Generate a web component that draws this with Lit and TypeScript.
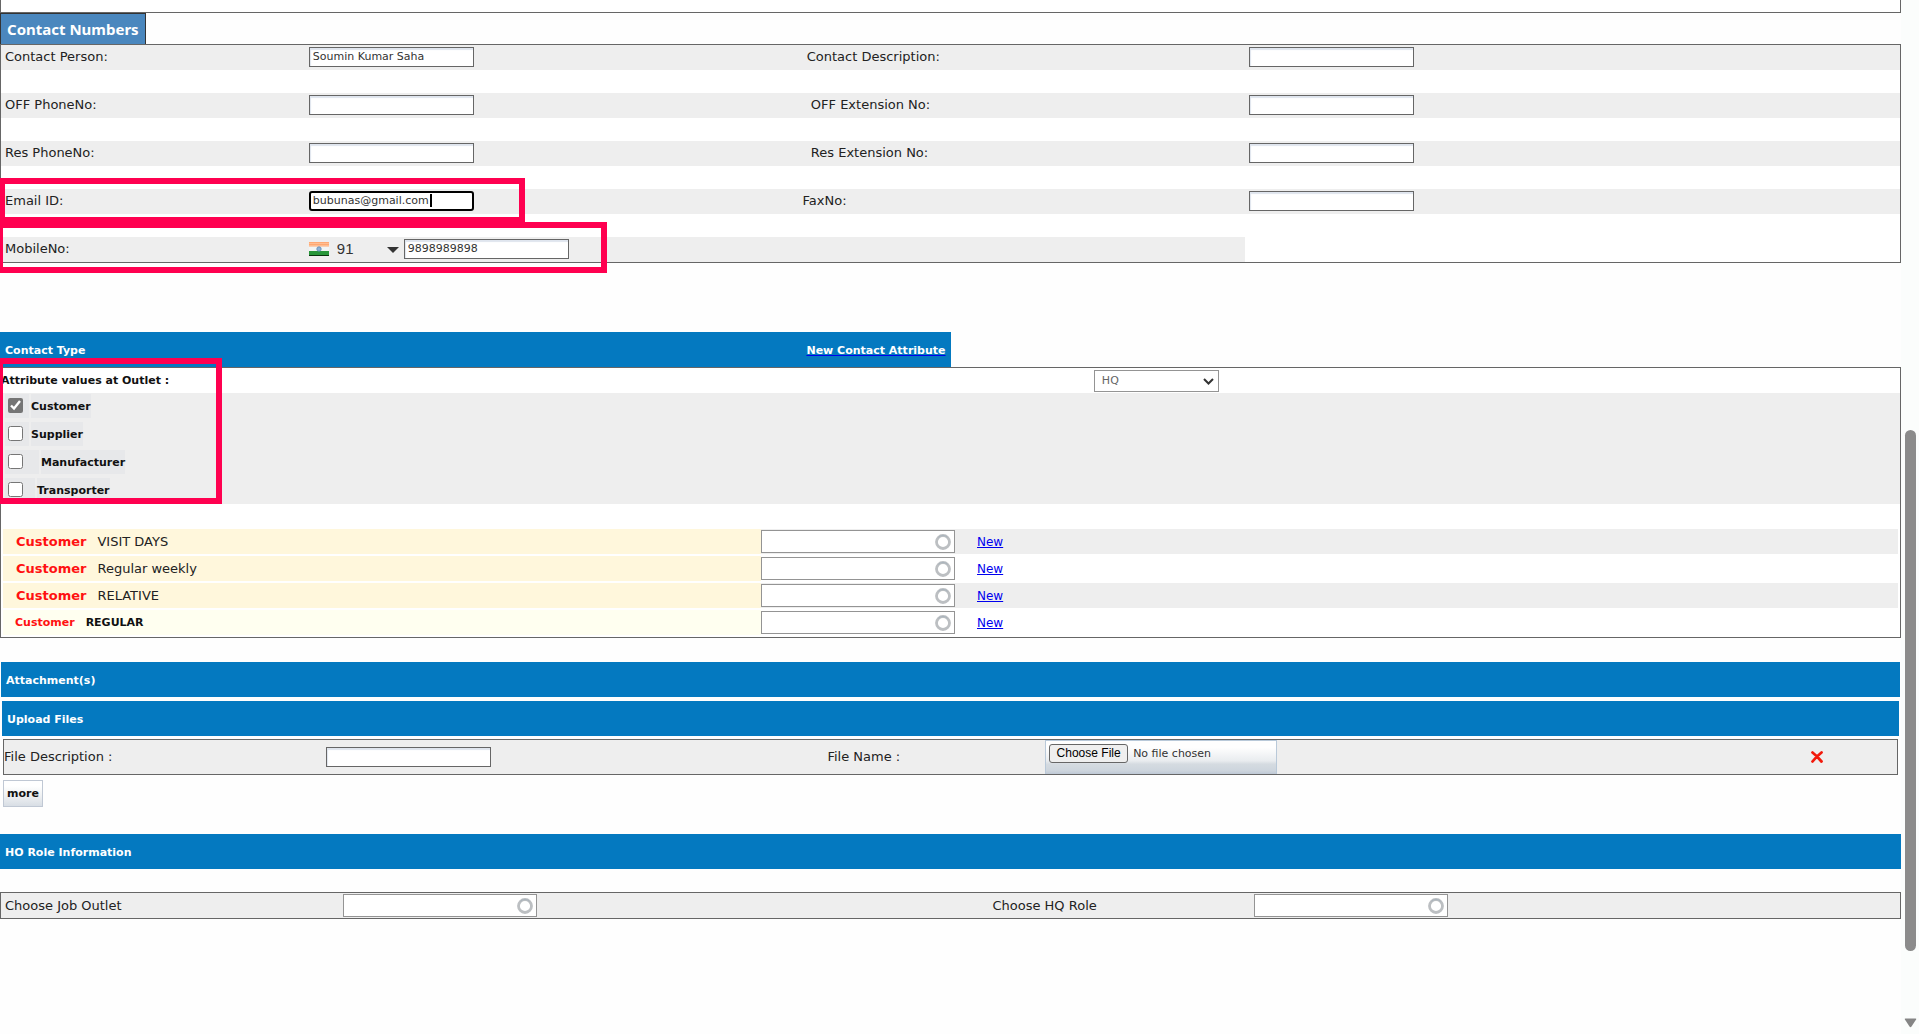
import { LitElement, html, css, nothing } from "lit";
import { customElement, property } from "lit/decorators.js";

interface ContactRow {
  id: string;
  label: string;
  value?: string;
  rightId?: string;
  rightLabel?: string;
}

const NB = "\u00a0";

const CONTACT_ROWS: ContactRow[] = [
  { id: "person", label: "Contact Person:", value: "Soumin Kumar Saha", rightId: "description", rightLabel: `${NB}Contact Description:` },
  { id: "off-phone", label: "OFF PhoneNo:", rightId: "off-ext", rightLabel: `${NB}${NB}OFF Extension No:` },
  { id: "res-phone", label: "Res PhoneNo:", rightId: "res-ext", rightLabel: `${NB}${NB}Res Extension No:` },
  { id: "email", label: "Email ID:", value: "bubunas@gmail.com", rightId: "fax", rightLabel: "FaxNo:" },
  { id: "mobile", label: "MobileNo:", value: "9898989898" },
];

const TYPES = [
  { id: "customer", label: "Customer", checked: true, size: "" },
  { id: "supplier", label: "Supplier", checked: false, size: "" },
  { id: "manufacturer", label: "Manufacturer", checked: false, size: "wide" },
  { id: "transporter", label: "Transporter", checked: false, size: "mid" },
];

const ATTRIBUTES = [
  { id: "visit-days", name: "VISIT DAYS", strong: false },
  { id: "weekly", name: "Regular weekly", strong: false },
  { id: "relative", name: "RELATIVE", strong: false },
  { id: "regular", name: "REGULAR", strong: true },
];

@customElement("lookup-field")
class LookupField extends LitElement {
  @property() label = "";

  static styles = css`
    :host {
      display: block;
    }
    .field {
      display: flex;
      align-items: center;
      box-sizing: border-box;
      width: 194px;
      height: 23px;
      border: 1px solid #949494;
      background: #fff;
      padding-right: 3px;
    }
    .text {
      flex: 1;
      min-width: 0;
      border: 0;
      outline: 0;
      background: none;
      font: 11px "DejaVu Sans", sans-serif;
    }
  `;

  render() {
    return html`<div class="field">
      <input class="text" type="text" aria-label=${this.label} />
      <svg width="16" height="16" viewBox="0 0 16 16" aria-hidden="true">
        <circle cx="8" cy="8" r="6.5" fill="none" stroke="#bcbfc2" stroke-width="2.8" />
        <path d="M3.4 3.4A6.5 6.5 0 0 1 12.6 3.4" fill="none" stroke="#a9b4bd" stroke-width="1" />
      </svg>
    </div>`;
  }
}

@customElement("app-root")
class AppRoot extends LitElement {
  static styles = css`
    :host {
      display: block;
      font: 13px/16px "DejaVu Sans", Verdana, sans-serif;
      color: #222;
    }
    .page {
      display: grid;
      grid-template-columns: minmax(0, 1fr) 18px;
      min-height: 100vh;
      background: #fefefe;
      overflow: hidden;
    }
    .content {
      min-width: 0;
    }
    .panel {
      box-sizing: border-box;
      border: 1px solid #666;
      background: #fff;
    }
    .previous {
      height: 13px;
      border-top: 0;
    }
    .tab {
      display: flex;
      align-items: center;
      box-sizing: border-box;
      width: max-content;
      height: 31px;
      margin: 0;
      padding: 0 6px;
      border: 1px solid #333;
      border-bottom: 0;
      background: #4a87be;
      color: #fff;
      font: bold 15px/18px "Noto Sans", sans-serif;
    }
    .anchor {
      position: relative;
    }
    .contact {
      display: grid;
      row-gap: 23px;
    }
    .row {
      display: grid;
      grid-template-columns: 16% 26% 23.5% minmax(0, 1fr);
      height: 25px;
    }
    .cell {
      display: flex;
      align-items: center;
      padding: 0 4px 1px;
      background: #eee;
      white-space: nowrap;
    }
    .blank {
      background: #fff;
    }
    .input {
      box-sizing: border-box;
      width: 165px;
      height: 20px;
      margin: 0;
      padding: 0 3px 2px;
      border: 1px solid #666;
      border-radius: 0;
      outline: 0;
      background: #fff;
      box-shadow: inset 1px 2px 1px #dfe5ee;
      color: #333;
      font: 11px/14px "DejaVu Sans", Verdana, sans-serif;
    }
    .active {
      padding: 0 2px 2px;
      border: 2px solid #000;
      border-radius: 3px;
      box-shadow: none;
    }
    .caret {
      position: absolute;
      top: 3px;
      left: 121px;
      width: 2px;
      height: 13px;
      background: #000;
    }
    .phone {
      display: flex;
      align-items: center;
    }
    .code {
      position: relative;
      display: flex;
      align-items: center;
      width: 95px;
    }
    .code-select {
      flex: 1;
      height: 20px;
      padding: 0 0 0 8px;
      border: 0;
      appearance: none;
      background: none;
      color: #333;
      font: 15px/18px "Liberation Sans", sans-serif;
    }
    .code-arrow {
      position: absolute;
      right: 5px;
      top: 8px;
      pointer-events: none;
    }
    .mark {
      position: absolute;
      box-sizing: border-box;
      border: 6px solid #ff0050;
      pointer-events: none;
    }
    .mark-email {
      top: 134px;
      left: -1px;
      width: 526px;
      height: 45px;
    }
    .mark-mobile {
      top: 178px;
      left: -3px;
      width: 610px;
      height: 51px;
    }
    .mark-types {
      top: 26px;
      left: -3px;
      width: 225px;
      height: 146px;
    }
    .type {
      margin-top: 69px;
    }
    .bar {
      display: flex;
      align-items: center;
      justify-content: space-between;
      box-sizing: border-box;
      height: 35px;
      margin: 0;
      padding: 2px 5px 0;
      background: #0479c0;
      color: #fff;
      font: bold 11px/14px "DejaVu Sans", Verdana, sans-serif;
    }
    .half {
      width: 50%;
    }
    .bar-title {
      margin: 0;
      font: inherit;
    }
    .bar-link {
      color: #fff;
      text-decoration: underline #0000ee;
    }
    .outlet {
      display: grid;
      grid-template-columns: 57.55% minmax(0, 1fr);
      align-items: center;
      height: 25px;
      color: #111;
      font: bold 11px/14px "DejaVu Sans", Verdana, sans-serif;
    }
    .select-wrap {
      position: relative;
      width: 125px;
      height: 22px;
    }
    .select {
      box-sizing: border-box;
      width: 100%;
      height: 100%;
      padding: 0 7px;
      border: 1px solid #949494;
      appearance: none;
      background: #fff;
      color: #666;
      font: 11px/14px "DejaVu Sans", Verdana, sans-serif;
    }
    .select-arrow {
      position: absolute;
      right: 5px;
      top: 8px;
      pointer-events: none;
    }
    .types {
      display: grid;
      align-content: start;
      box-sizing: border-box;
      row-gap: 4px;
      height: 111px;
      padding: 1px 0 0 4px;
      background: #eee;
      color: #111;
      font: bold 11px/14px "DejaVu Sans", Verdana, sans-serif;
    }
    .type-row {
      display: flex;
      gap: 2px;
      height: 24px;
    }
    .check-cell {
      display: flex;
      align-items: center;
      width: 24px;
      background: #e7e8ea;
    }
    .mid {
      width: 30px;
    }
    .wide {
      width: 34px;
    }
    .check {
      width: 15px;
      height: 15px;
      margin: 0 3px 1px;
      accent-color: #757575;
    }
    .check-label {
      display: flex;
      align-items: center;
      padding-top: 1px;
      background: #e7e8ea;
    }
    .attributes {
      display: grid;
      row-gap: 2px;
      padding: 25px 2px 2px;
    }
    .attribute {
      display: grid;
      grid-template-columns: 40% minmax(0, 1fr);
      height: 25px;
    }
    .attribute-name {
      display: flex;
      align-items: center;
      gap: 11px;
      padding-left: 13px;
      background: #fff7dc;
    }
    .attribute-last {
      padding-left: 12px;
      background: #fffff0;
      color: #111;
      font: bold 11px/14px "DejaVu Sans", Verdana, sans-serif;
    }
    .who {
      color: #f11;
      font-weight: bold;
    }
    .attribute-value {
      display: flex;
      align-items: center;
      gap: 22px;
      background: #eee;
    }
    .attribute:nth-child(even) .attribute-value,
    .attribute-name.attribute-last + .attribute-value {
      background: #fff;
    }
    .new {
      color: #0000ee;
      font-size: 12px;
    }
    .attachments {
      display: grid;
      gap: 4px;
      margin: 24px 1px 0;
    }
    .upload {
      margin: 0 1px;
    }
    .file {
      display: grid;
      grid-template-columns: 17% 26.5% 11.5% minmax(0, 1fr) 88px;
      align-items: center;
      height: 36px;
      margin: 3px 1px 0;
      background: #eee;
    }
    .file-pick {
      box-sizing: border-box;
      width: 232px;
      height: 34px;
      padding: 3px;
      border: 1px solid #b9c9d9;
      border-bottom: 0;
      background: linear-gradient(#fefefe 20%, #e9ecef 60%, #d5dbe1 70%, #cdd5dd 90%, #bfc9d6);
      color: #333;
      font: 11px/14px "DejaVu Sans", Verdana, sans-serif;
    }
    .file-pick::file-selector-button {
      box-sizing: border-box;
      width: 79px;
      height: 19px;
      margin: 0 5px 0 0;
      padding: 0;
      border: 1px solid #666;
      border-radius: 3px;
      background: #efefef;
      color: #000;
      font: 12px/15px "Liberation Sans", sans-serif;
    }
    .remove {
      display: flex;
      width: 16px;
      padding: 2px;
      border: 0;
      background: none;
    }
    .more {
      justify-self: start;
      box-sizing: border-box;
      height: 27px;
      margin: 1px 2px 0;
      padding: 0 3px;
      border: 1px solid #c0c8d4;
      background: linear-gradient(#fff 20%, #eef0f2 60%, #d8dee5);
      color: #111;
      font: bold 11px/14px "DejaVu Sans", Verdana, sans-serif;
    }
    .role-bar {
      margin-top: 27px;
    }
    .role {
      display: grid;
      grid-template-columns: 18% 34% 14% minmax(0, 1fr);
      align-items: center;
      height: 27px;
      margin-top: 23px;
      background: #eee;
    }
    .role-label {
      padding-left: 4px;
    }
    .scroll {
      display: grid;
      grid-template-rows: 430fr 521fr 67fr 16px;
      justify-items: center;
      background: #fbfdfc;
    }
    .thumb {
      grid-row: 2;
      width: 11px;
      border-radius: 6px;
      background: #8b8b8b;
    }
    .scroll-arrow {
      grid-row: 4;
    }
  `;

  private leftField(r: ContactRow) {
    if (r.id === "mobile") {
      return html`<div class="phone">
        <div class="code">
          <svg width="20" height="14" viewBox="0 0 20 14" aria-hidden="true">
            <path d="M0 0h20v5H0z" fill="#ffa872" />
            <path d="M0 1.5h20M0 3.5h20" stroke="#ffbd91" />
            <path d="M0 4.5h20v5H0z" fill="#f1f5f5" />
            <path d="M0 9h20v5H0z" fill="#28963a" />
            <path d="M0 13.5h20" stroke="#08330e" />
            <circle cx="10" cy="7" r="2.2" fill="#8fb2d4" stroke="#5a86b5" stroke-width=".8" />
          </svg>
          <select class="code-select" aria-label="Country code"><option>91</option></select>
          <svg class="code-arrow" width="12" height="6" viewBox="0 0 12 6" aria-hidden="true">
            <path d="M0 0h12L6 6z" fill="#333" />
          </svg>
        </div>
        <input class="input" id="mobile" type="tel" .value=${r.value ?? ""} />
      </div>`;
    }
    if (r.id === "email") {
      return html`<div class="anchor phone">
        <input class="input active" id="email" type="email" .value=${r.value ?? ""} />
        <span class="caret"></span>
      </div>`;
    }
    return html`<input class="input" id=${r.id} type="text" .value=${r.value ?? ""} />`;
  }

  render() {
    return html`<div class="page">
      <main class="content">
        <div class="panel previous"></div>
        <h2 class="tab">Contact Numbers</h2>

        <section class="anchor">
          <div class="panel contact">
            ${CONTACT_ROWS.map(
              (r) => html`<div class="row">
                <div class="cell"><label for=${r.id}>${r.label}</label></div>
                <div class="cell">${this.leftField(r)}</div>
                <div class="cell">
                  ${r.rightId ? html`<label for=${r.rightId}>${r.rightLabel}</label>` : nothing}
                </div>
                <div class="cell ${r.rightId ? "" : "blank"}">
                  ${r.rightId ? html`<input class="input" id=${r.rightId} type="text" />` : nothing}
                </div>
              </div>`
            )}
          </div>
          <div class="mark mark-email"></div>
          <div class="mark mark-mobile"></div>
        </section>

        <section class="anchor type">
          <div class="bar half">
            <h3 class="bar-title">Contact Type</h3>
            <a class="bar-link" href="#attribute">New Contact Attribute</a>
          </div>
          <div class="panel">
            <div class="outlet">
              <label for="outlet">Attribute values at Outlet :</label>
              <div class="select-wrap">
                <select class="select" id="outlet"><option>HQ</option></select>
                <svg class="select-arrow" width="11" height="7" viewBox="0 0 11 7" aria-hidden="true">
                  <path d="M1 1l4.5 4.5L10 1" fill="none" stroke="#333" stroke-width="2" />
                </svg>
              </div>
            </div>
            <div class="types">
              ${TYPES.map(
                (t) => html`<div class="type-row">
                  <span class="check-cell ${t.size}">
                    <input class="check" id=${t.id} type="checkbox" .checked=${t.checked} />
                  </span>
                  <label class="check-label" for=${t.id}>${t.label}</label>
                </div>`
              )}
            </div>
            <div class="attributes">
              ${ATTRIBUTES.map(
                (a) => html`<div class="attribute">
                  <div class="attribute-name ${a.strong ? "attribute-last" : ""}">
                    <span class="who">Customer</span><span>${a.name}</span>
                  </div>
                  <div class="attribute-value">
                    <lookup-field label=${a.name}></lookup-field>
                    <a class="new" href="#${a.id}">New</a>
                  </div>
                </div>`
              )}
            </div>
          </div>
          <div class="mark mark-types"></div>
        </section>

        <section class="attachments">
          <h3 class="bar">Attachment(s)</h3>
          <div>
            <h3 class="bar upload">Upload Files</h3>
            <div class="upload">
              <div class="panel file">
                <label for="file-description">File Description :</label>
                <div><input class="input" id="file-description" type="text" /></div>
                <label for="file-name">File Name :</label>
                <input class="file-pick" id="file-name" type="file" />
                <button class="remove" aria-label="Remove file">
                  <svg width="12" height="12" viewBox="0 0 12 12" aria-hidden="true">
                    <path d="M1.5 1.5Q6 5 10.5 10.5M10.5 1.5Q5 6 1.5 10.5" fill="none" stroke="#f21a0c" stroke-width="2.8" stroke-linecap="round" />
                  </svg>
                </button>
              </div>
            </div>
          </div>
          <button class="more">more</button>
        </section>

        <h3 class="bar role-bar">HO Role Information</h3>
        <section class="panel role">
          <span class="role-label">Choose Job Outlet</span>
          <lookup-field label="Choose Job Outlet"></lookup-field>
          <span class="role-label">Choose HQ Role</span>
          <lookup-field label="Choose HQ Role"></lookup-field>
        </section>
      </main>
      <div class="scroll" aria-hidden="true">
        <div class="thumb"></div>
        <svg class="scroll-arrow" width="13" height="10" viewBox="0 0 13 10">
          <path d="M1.5 .5h10q1.2 0 .6 1L7.5 8.500q-1 1.500-2 0L.9 1.500q-.6-1 .6-1z" fill="#858585" />
        </svg>
      </div>
    </div>`;
  }
}
